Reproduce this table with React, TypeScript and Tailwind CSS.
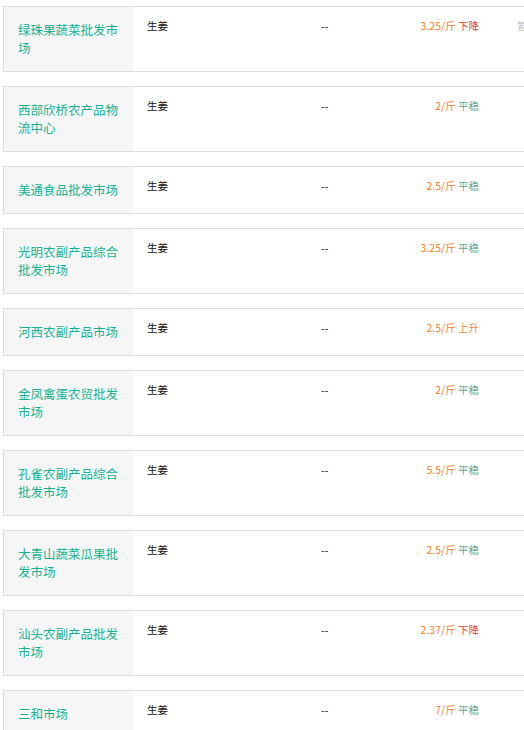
type Trend = '下降' | '平稳' | '上升'

type Market = {
  name: string
  variety: string
  origin: string
  price: string
  trend: Trend
  note?: string
}

const markets: Market[] = [
  { name: '绿珠果蔬菜批发市场', variety: '生姜', origin: '--', price: '3.25/斤', trend: '下降', note: '暂无' },
  { name: '西部欣桥农产品物流中心', variety: '生姜', origin: '--', price: '2/斤', trend: '平稳' },
  { name: '美通食品批发市场', variety: '生姜', origin: '--', price: '2.5/斤', trend: '平稳' },
  { name: '光明农副产品综合批发市场', variety: '生姜', origin: '--', price: '3.25/斤', trend: '平稳' },
  { name: '河西农副产品市场', variety: '生姜', origin: '--', price: '2.5/斤', trend: '上升' },
  { name: '金凤禽蛋农贸批发市场', variety: '生姜', origin: '--', price: '2/斤', trend: '平稳' },
  { name: '孔雀农副产品综合批发市场', variety: '生姜', origin: '--', price: '5.5/斤', trend: '平稳' },
  { name: '大青山蔬菜瓜果批发市场', variety: '生姜', origin: '--', price: '2.5/斤', trend: '平稳' },
  { name: '汕头农副产品批发市场', variety: '生姜', origin: '--', price: '2.37/斤', trend: '下降' },
  { name: '三和市场', variety: '生姜', origin: '--', price: '7/斤', trend: '平稳' },
]

const trendColor: Record<Trend, string> = {
  下降: 'text-[#e2473d]',
  平稳: 'text-[#5fa898]',
  上升: 'text-[#ef8a42]',
}

const MarketRow = ({ name, variety, origin, price, trend, note }: Market) => (
  <div className="flex w-[600px] border border-[#dddddd] bg-white">
    <div className="w-[129px] shrink-0 bg-[#f6f6f6] pl-[14px] pr-[12px] py-[14px] text-[12.5px] leading-[18px] text-[#13b393]">
      {name}
    </div>
    <div className="w-[174px] shrink-0 pl-[14px] pt-[13px] text-[10.5px] leading-[12px] text-[#111]">
      {variety}
    </div>
    <div className="w-[80px] shrink-0 pl-[14px] pt-[13px] text-[10.5px] leading-[12px] text-[#111]">
      {origin}
    </div>
    <div className="w-[106px] shrink-0 pr-[14px] pt-[13px] text-right text-[10.5px] leading-[12px]">
      <span className="text-[#f7811f]">{price}</span>{' '}
      <span className={trendColor[trend]}>{trend}</span>
    </div>
    <div className="flex-1 pl-[24px] pt-[13px] text-[10px] leading-[12px] text-[#bbbbbb]">
      {note}
    </div>
  </div>
)

export default function App() {
  return (
    <div
      className="h-[730px] w-full overflow-hidden bg-white pt-[6px] pl-[3px]"
      style={{ fontFamily: '"Noto Sans CJK SC", "Liberation Sans", sans-serif' }}
    >
      <div className="flex flex-col gap-[14px]">
        {markets.map((m) => (
          <MarketRow key={m.name} {...m} />
        ))}
      </div>
    </div>
  )
}
